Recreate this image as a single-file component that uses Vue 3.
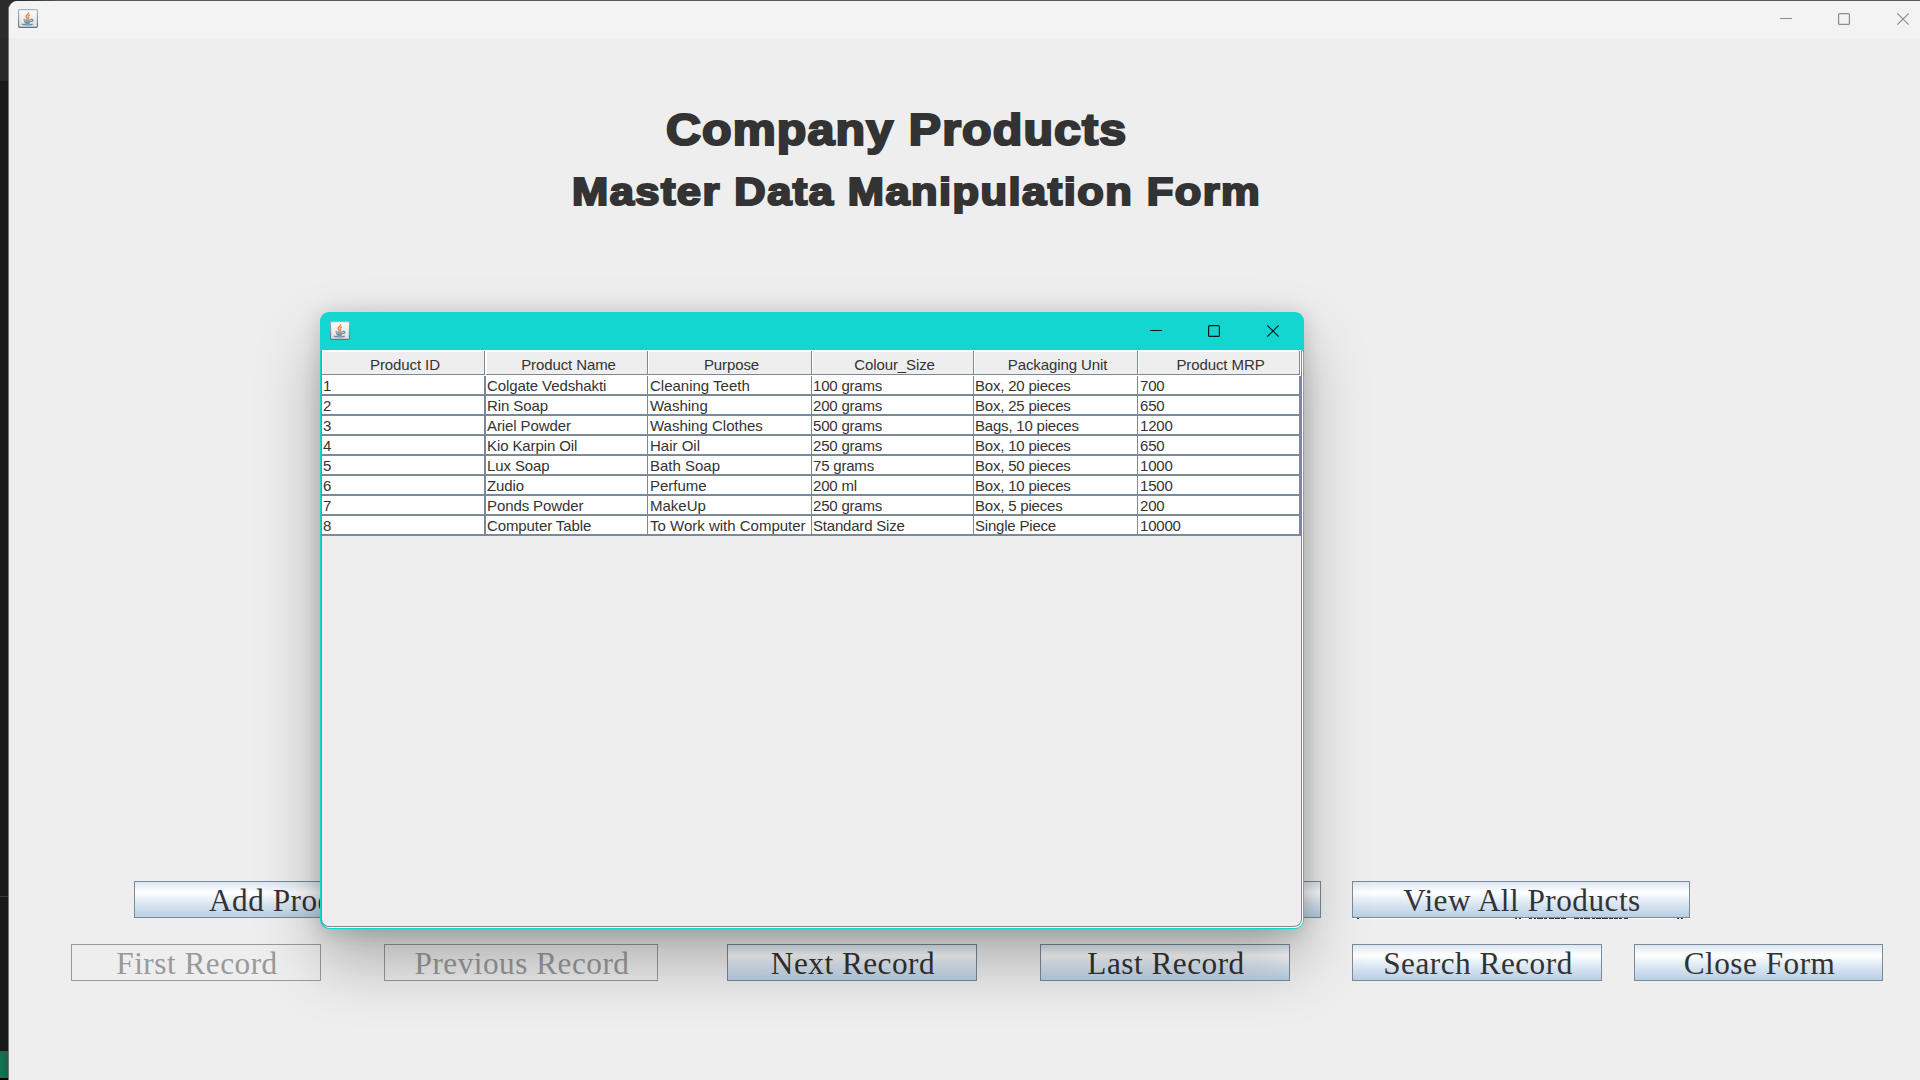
<script setup>
import { h } from 'vue'

const JavaIcon = () =>
  h('svg', { width: 20, height: 19, viewBox: '0 0 20 19', style: 'display:block' }, [
    h('defs', [
      h('linearGradient', { id: 'tile', x1: 0, y1: 0, x2: 0, y2: 1 }, [
        h('stop', { offset: 0, 'stop-color': '#ffffff' }),
        h('stop', { offset: 1, 'stop-color': '#dcdcdc' })
      ]),
      h('linearGradient', { id: 'edge', x1: 0, y1: 0, x2: 0, y2: 1 }, [
        h('stop', { offset: 0, 'stop-color': '#9fb6c6' }),
        h('stop', { offset: 1, 'stop-color': '#56748c' })
      ])
    ]),
    h('rect', { x: 0.6, y: 0.6, width: 18.8, height: 17.8, rx: 1.2, fill: 'url(#tile)', stroke: 'url(#edge)', 'stroke-width': 1.1 }),
    h('path', { d: 'M10.6 3.2C11.3 5 7.6 5.900 8 7.600C8.200 8.700 9.300 9.100 9.200 10.200M11.900 5.800C9.600 6.600 9.700 7.300 10.600 8.200C11.100 8.800 10.800 9.400 10.300 9.900', fill: 'none', stroke: '#ee8c3a', 'stroke-width': 1.4 }),
    h('path', { d: 'M5.600 10.500C7 11.300 11.500 11.300 13.200 10.500M6 12.200C7.600 13.100 11.400 13.100 12.600 12.200M13 10.600C15.600 9.900 15.400 12.300 13 12.700M6.700 13.700C8 14.300 10.800 14.300 12 13.700M3.800 15C5.500 16.300 12.800 16.300 14.700 14.900', fill: 'none', stroke: '#6788a3', 'stroke-width': 1.3 })
  ])

const WindowControls = () =>
  h('svg', { width: 130, height: 14, viewBox: '0 0 130 14', fill: 'none', stroke: 'currentColor', style: 'display:block' }, [
    h('path', { d: 'M0 6.500H12', 'stroke-width': 1 }),
    h('rect', { x: 58.6, y: 1.6, width: 10.8, height: 10.8, rx: 1, 'stroke-width': 1.2 }),
    h('path', { d: 'M117.300 1.300L128.700 12.700M128.700 1.300L117.300 12.700', 'stroke-width': 1.2 })
  ])

const columns = ['Product ID', 'Product Name', 'Purpose', 'Colour_Size', 'Packaging Unit', 'Product MRP']
const rows = [
  ['1', 'Colgate Vedshakti', 'Cleaning Teeth', '100 grams', 'Box, 20 pieces', '700'],
  ['2', 'Rin Soap', 'Washing', '200 grams', 'Box, 25 pieces', '650'],
  ['3', 'Ariel Powder', 'Washing Clothes', '500 grams', 'Bags, 10 pieces', '1200'],
  ['4', 'Kio Karpin Oil', 'Hair Oil', '250 grams', 'Box, 10 pieces', '650'],
  ['5', 'Lux Soap', 'Bath Soap', '75 grams', 'Box, 50 pieces', '1000'],
  ['6', 'Zudio', 'Perfume', '200 ml', 'Box, 10 pieces', '1500'],
  ['7', 'Ponds Powder', 'MakeUp', '250 grams', 'Box, 5 pieces', '200'],
  ['8', 'Computer Table', 'To Work with Computer', 'Standard Size', 'Single Piece', '10000']
]
const navButtons = [
  { label: 'First Record', disabled: true },
  { label: 'Previous Record', disabled: true },
  { label: 'Next Record' },
  { label: 'Last Record' },
  { label: 'Search Record' },
  { label: 'Close Form' }
]
</script>

<template>
  <div class="screen">
    <div class="backdrop">
      <i class="bd-top"></i><i class="bd-mid"></i><i class="bd-low"></i><i class="bd-green"></i>
    </div>
    <main class="form">
      <header class="bar">
        <JavaIcon />
        <WindowControls />
      </header>
      <h1><span>Company Products</span></h1>
      <h2><span>Master Data Manipulation Form</span></h2>
      <div class="row actions">
        <button class="btn add">Add Product</button>
        <button class="btn middle"></button>
        <button class="btn view">View All Products
          <svg class="sliver" width="338" height="2" viewBox="0 0 338 2">
            <path d="M0 .5H338" stroke="#fff" />
            <path d="M5 .5h2M163 .5h2m2 0h2M177 .5h3m2 0h2m1 0h6m1 0h3m2 0h5m1 0h5m1 0h5M222 .5h5m1 0h3m1 0h6m2 0h3m1 0h5m1 0h6m1 0h4m1 0h4m1 0h3m2 0h4M325 .5h2m2 0h2" stroke="#333" />
          </svg>
        </button>
      </div>
      <div class="row nav">
        <button v-for="b in navButtons" :key="b.label" class="btn" :disabled="b.disabled">{{ b.label }}</button>
      </div>
    </main>

    <section class="dialog">
      <header class="bar">
        <JavaIcon />
        <WindowControls />
      </header>
      <div class="pane">
        <div class="line head">
          <div v-for="c in columns" :key="c">{{ c }}</div>
        </div>
        <div class="body">
          <div v-for="r in rows" :key="r[0]" class="line">
            <div v-for="(c, i) in r" :key="i">{{ c }}</div>
          </div>
        </div>
      </div>
    </section>
  </div>
</template>

<style>
html, body { margin: 0; overflow: hidden; }
</style>

<style scoped>
* { box-sizing: border-box; }
.screen {
  position: relative;
  display: flex;
  width: 1920px;
  height: 1080px;
  overflow: hidden;
  background: linear-gradient(90deg, #2b2b2b 0 20px, #5a575a 60px);
  color: #333;
}
.backdrop { display: flex; flex-direction: column; width: 8px; background: #000; }
.backdrop i { display: block; }
.bd-top { height: 81px; background: linear-gradient(#2b2b2b 37px, #282828 38px); }
.bd-mid { height: 816px; background: #1a1a1a; border-bottom: 1px solid #3a3a3a; }
.bd-low { height: 154px; background: #191919; }
.bd-green { height: 27px; background: linear-gradient(90deg, #157355, #146448); }
.form {
  display: flex;
  flex-direction: column;
  width: 1912px;
  height: 1079px;
  margin-top: 1px;
  border-left: 1px solid #777;
  border-top-left-radius: 9px;
  background: #eee;
  overflow: hidden;
}
.bar { display: flex; justify-content: space-between; flex: none; }
.form .bar { height: 37px; padding: 8px 10px 0 9px; background: #f3f3f3; color: #8c8c8c; }
.form .bar svg:last-child { margin-top: 3px; }
h1, h2 {
  flex: none;
  margin: 0;
  font-family: "Liberation Sans", Arial, sans-serif;
  font-weight: 700;
  white-space: nowrap;
  line-height: 60px;
  height: 60px;
  -webkit-text-stroke: 2.2px #333;
}
h1 { margin-top: 62px; padding-left: 657px; font-size: 44px; letter-spacing: 1px; }
h2 { margin-top: 1px; padding-left: 563px; font-size: 39.5px; letter-spacing: 1.32px; }
h1 span, h2 span { display: inline-block; transform: scaleX(1.1); transform-origin: 0 50%; }
.row { display: grid; flex: none; height: 37px; }
.actions { margin-top: 660px; padding-left: 125px; grid-template-columns: 849px 369px 338px; }
.nav { margin-top: 26px; padding-left: 62px; grid-template-columns: 313px 343px 313px 312px 282px 249px; }
.btn {
  position: relative;
  height: 37px;
  padding: 0 0 0 2px;
  border: 1px solid #7a8a99;
  border-radius: 0;
  background: linear-gradient(#dde8f3, #fff 30%, #dde8f3 60%, #b8cfe5);
  color: #333;
  font: 31.25px/37px "Liberation Serif", "Times New Roman", serif;
  letter-spacing: .5px;
  white-space: nowrap;
}
.actions .btn { width: 338px; }
.actions .add { padding-left: 74px; text-align: left; }
.nav .btn { width: 250px; }
.nav .btn:nth-child(2) { width: 274px; }
.nav .btn:last-child { width: 249px; }
.btn:disabled { border-color: #999; background: #eee; color: #999; }
.sliver { position: absolute; left: -1px; top: 36px; }
.dialog {
  position: absolute;
  left: 320px;
  top: 312px;
  display: flex;
  flex-direction: column;
  width: 984px;
  height: 617px;
  padding: 0 1px 1px;
  border-radius: 9px;
  background: #14d6d0;
  box-shadow: 0 32px 64px rgba(0, 0, 0, .28), 0 2px 21px rgba(0, 0, 0, .16);
  overflow: hidden;
}
.dialog .bar { height: 38px; padding: 9px 23px 0 9px; color: #061a1a; }
.dialog .bar svg:last-child { margin-top: 3px; }
.pane {
  flex: 1;
  margin: 0 1px 1px 0;
  border: 1px solid #7a8a99;
  border-top-color: #fff;
  border-radius: 0 0 8px 8px;
  box-shadow: 1px 1px 0 #fff;
  background: #eee;
  font: 15px/17px "Liberation Sans", Arial, sans-serif;
  letter-spacing: -.1px;
}
.line { display: grid; grid-template-columns: 164px 162px 164px 162px 164px 163px; }
.head { height: 25px; text-align: center; background: #fff; }
.head div { height: 24px; padding: 5px 0 0 4px; border: solid #7a8a99; border-width: 0 1px 1px 0; background: #eee; box-shadow: inset 1px 1px #fff; }
.head div:first-child, .head div:last-child { margin-right: 1px; }
.body .line { height: 20px; }
.body .line div {
  height: 20px;
  padding: 1px 0 0 1px;
  border: solid #7a8a99;
  border-width: 0 1px 2px 0;
  background: #fff;
  letter-spacing: -.2px;
  white-space: nowrap;
}
.body .line div:first-child { border-right-width: 2px; }
.body .line div:nth-child(2) { letter-spacing: -.1px; }
.body .line div:nth-child(3) { padding-left: 2px; letter-spacing: 0; }
.body .line div:last-child { padding-left: 2px; border-right-width: 2px; }
</style>
